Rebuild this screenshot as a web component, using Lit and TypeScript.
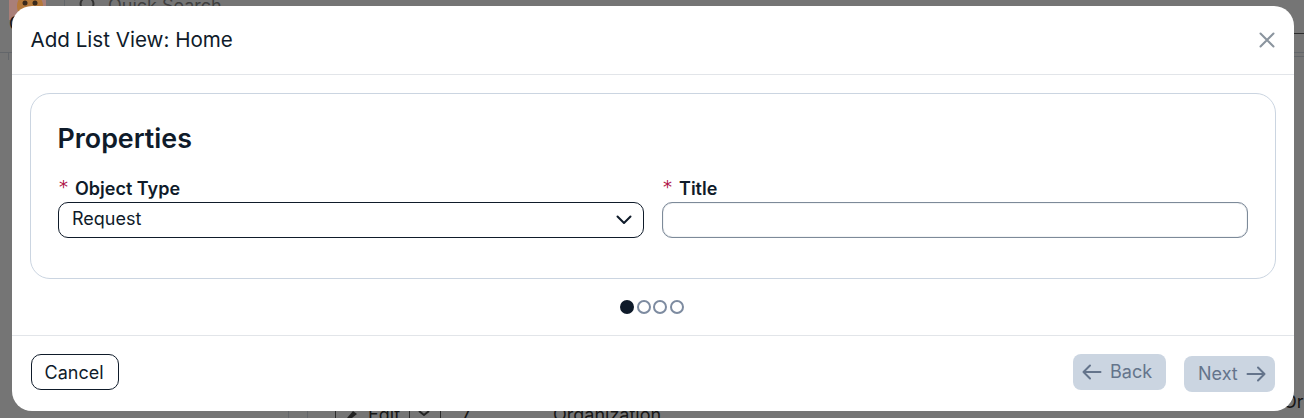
import { LitElement, html, css } from "lit";
import { customElement } from "lit/decorators.js";

@customElement("app-root")
export class AppRoot extends LitElement {
  static styles = css`
    :host { display: block; width: 1304px; height: 418px; position: relative; overflow: hidden; background: #757575; font-family: Inter, "Liberation Sans", sans-serif; color: #0f1b2a; }
    .bg { position: absolute; inset: 0; color: #161616; font-size: 18px; }
    .bg-text { position: absolute; white-space: nowrap; line-height: 22px; }
    .bg-line { position: absolute; background: #63666a; }
    .bg-line.dark { background: #2c2c2c; }
    .bg-art { position: absolute; left: 0; top: 0; display: block; }
    .modal { position: absolute; inset: 6px 10px 7px 12px; display: flex; flex-direction: column; background: #fff; border-radius: 20px; }
    .head { height: 69px; flex: none; box-sizing: border-box; padding: 0 19px 0 18.5px; display: flex; align-items: center; justify-content: space-between; border-bottom: 1px solid #e2e5e9; }
    .head h1 { margin: 0; font-size: 20.6px; font-weight: 400; line-height: 28px; }
    .close { display: block; width: 16px; height: 16px; color: #8a949e; }
    .body { flex: 1; padding: 18px 18px 0; display: flex; flex-direction: column; align-items: stretch; }
    .card { height: 186px; box-sizing: border-box; border: 1px solid #cbd5e1; border-radius: 20px; padding: 27px 27px 0; }
    .card h2 { margin: 0 0 21px -0.5px; font-size: 26.8px; line-height: 34px; font-weight: 600; }
    .fields { display: grid; grid-template-columns: 586px 586px; gap: 18px; }
    .label { display: flex; font-size: 18px; font-weight: 600; line-height: 26px; height: 26px; }
    .star { color: #b0144a; font-family: "DejaVu Sans", sans-serif; font-weight: 400; width: 17px; padding-left: 1px; box-sizing: border-box; line-height: 22px; }
    .control { height: 36px; box-sizing: border-box; border-radius: 10px; border: 1px solid #0f1b2a; display: flex; align-items: center; justify-content: space-between; padding: 0 11px 3px 13px; font-size: 18px; }
    .control.input { border-color: #7d8a99; box-shadow: inset 0 0 1px #7d8a99; }
    .chev { width: 16px; height: 10px; display: block; margin-top: 3px; }
    .dots { display: flex; justify-content: center; gap: 2.67px; margin: 21px 0 0 -2px; }
    .dot { width: 14px; height: 14px; box-sizing: border-box; border-radius: 50%; border: 2px solid #7d8ba0; }
    .dot.on { background: #0f1b2a; border-color: #0f1b2a; }
    .foot { height: 76px; flex: none; box-sizing: border-box; border-top: 1px solid #e2e5e9; padding: 0 19px; display: flex; align-items: flex-start; justify-content: space-between; }
    button { font: inherit; font-size: 18px; box-sizing: border-box; display: flex; align-items: center; gap: 8px; }
    .cancel { margin-top: 18px; height: 36px; width: 88px; justify-content: center; padding: 0 2px 0 0; background: #fff; border: 1px solid #0f1b2a; border-radius: 10px; color: #0f1b2a; }
    .nav { display: flex; gap: 18px; align-items: flex-start; }
    .muted { height: 36px; margin-top: 18px; border: none; border-radius: 8px; background: #cbd5e1; color: #64748b; padding: 0 0 0 9px; width: 93px; gap: 8px; }
    .muted.next { margin-top: 20px; width: 91px; padding-left: 14px; gap: 8px; }
    .muted span { padding-bottom: 2px; }
    .muted svg { width: 20px; height: 20px; display: block; }
  `;
  render() {
    return html`
      <div class="bg">
        <svg class="bg-art" width="120" height="30" viewBox="0 0 120 30" fill="none">
          <rect x="9" y="0" width="37" height="20" fill="#a97f78"/>
          <circle cx="30" cy="6" r="13" fill="#b5793a"/>
          <circle cx="25" cy="3" r="2.500" fill="#3a2a1c"/>
          <circle cx="35" cy="3" r="2.500" fill="#3a2a1c"/>
          <circle cx="87" cy="4" r="6.500" stroke="#333" stroke-width="2"/>
        </svg>
        <div class="bg-line" style="left:64px;top:0;width:1px;height:6px"></div>
        <div class="bg-line" style="left:0;top:52px;width:12px;height:1px"></div>
        <div class="bg-line" style="left:8px;top:52px;width:1px;height:8px"></div>
        <div class="bg-line dark" style="left:1294px;top:33px;width:10px;height:1px"></div>
        <div class="bg-line" style="left:1294px;top:52px;width:10px;height:1px"></div>
        <div class="bg-line" style="left:1294px;top:56px;width:10px;height:1px"></div>
        <div class="bg-line" style="left:288px;top:411px;width:1px;height:7px"></div>
        <div class="bg-line" style="left:307px;top:411px;width:1px;height:7px"></div>
        <div class="bg-line dark" style="left:335px;top:411px;width:1px;height:7px"></div>
        <div class="bg-line dark" style="left:409px;top:411px;width:1px;height:7px"></div>
        <div class="bg-line dark" style="left:440px;top:411px;width:1px;height:7px"></div>
        <span class="bg-text" style="left:9px;top:13px">C</span>
        <span class="bg-text" style="left:108px;top:-5px;color:#3f3f3f">Quick Search</span>
        <svg class="bg-art" style="left:346px;top:410px" width="16" height="8" viewBox="0 0 16 8" fill="none"><path d="M1 8l6-7 4 3-5 4z" fill="#222"/></svg>
        <span class="bg-text" style="left:368px;top:404px">Edit</span>
        <svg class="bg-art" style="left:418px;top:411px" width="12" height="5" viewBox="0 0 12 5" fill="none"><path d="M1 0l5 4 5-4" stroke="#222" stroke-width="2"/></svg>
        <span class="bg-text" style="left:461px;top:404px">7</span>
        <span class="bg-text" style="left:553px;top:404px">Organization</span>
        <span class="bg-text" style="left:1283px;top:391px">Or</span>
      </div>
      <div class="modal">
        <div class="head">
          <h1>Add List View: Home</h1>
          <svg class="close" viewBox="0 0 16 16" fill="none" stroke="currentColor" stroke-width="2" stroke-linecap="round"><path d="M1.500 1.500l13 13M14.500 1.500l-13 13"/></svg>
        </div>
        <div class="body">
          <div class="card">
            <h2>Properties</h2>
            <div class="fields">
              <div>
                <div class="label"><span class="star">*</span>Object Type</div>
                <div class="control">Request
                  <svg class="chev" viewBox="0 0 16 10" fill="none" stroke="currentColor" stroke-width="2" stroke-linecap="round" stroke-linejoin="round"><path d="M1.500 1.500L8 8l6.500-6.500"/></svg>
                </div>
              </div>
              <div>
                <div class="label"><span class="star">*</span>Title</div>
                <div class="control input"></div>
              </div>
            </div>
          </div>
          <div class="dots"><span class="dot on"></span><span class="dot"></span><span class="dot"></span><span class="dot"></span></div>
        </div>
        <div class="foot">
          <button class="cancel">Cancel</button>
          <div class="nav">
            <button class="muted"><svg viewBox="0 0 20 20" fill="none" stroke="currentColor" stroke-width="2" stroke-linecap="round" stroke-linejoin="round"><path d="M18.500 10h-17M8 3.500L1.500 10 8 16.500"/></svg><span>Back</span></button>
            <button class="muted next"><span>Next</span><svg viewBox="0 0 20 20" fill="none" stroke="currentColor" stroke-width="2" stroke-linecap="round" stroke-linejoin="round"><path d="M1.500 10h17M12 3.500l6.500 6.500-6.500 6.500"/></svg></button>
          </div>
        </div>
      </div>
    `;
  }
}
